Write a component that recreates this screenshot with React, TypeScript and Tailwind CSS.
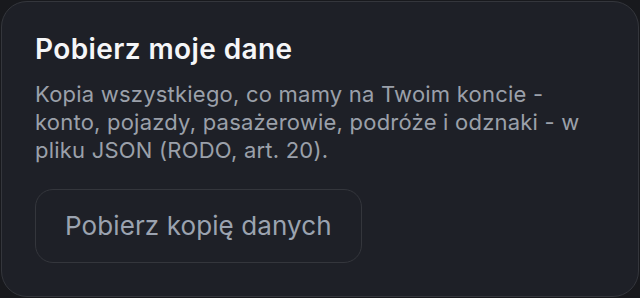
export default function App() {
  return (
    <div className="h-[298px] w-[640px] bg-[#18191d] p-px font-['Inter',sans-serif]">
      <section className="flex h-full flex-col rounded-[26px] border border-[#34363c] bg-[#1e2027] px-[33px] pt-[29px]">
        <h2 className="text-[28px] leading-9 font-semibold tracking-[0.4px] text-[#f5f6f8]">Pobierz moje dane</h2>
        <p className="mt-[13px] text-[22px] leading-7 tracking-[0.01em] text-[#9ba0aa]">
          Kopia wszystkiego, co mamy na Twoim koncie - konto, pojazdy, pasażerowie, podróże i odznaki - w pliku JSON (RODO, art. 20).
        </p>
        <div className="mt-[25px]">
          <button className="rounded-[18px] border border-[#34363c] px-[29px] py-5 text-[26px] leading-8 tracking-[0.1px] text-[#9ba3b0]">
            Pobierz kopię danych
          </button>
        </div>
      </section>
    </div>
  );
}
